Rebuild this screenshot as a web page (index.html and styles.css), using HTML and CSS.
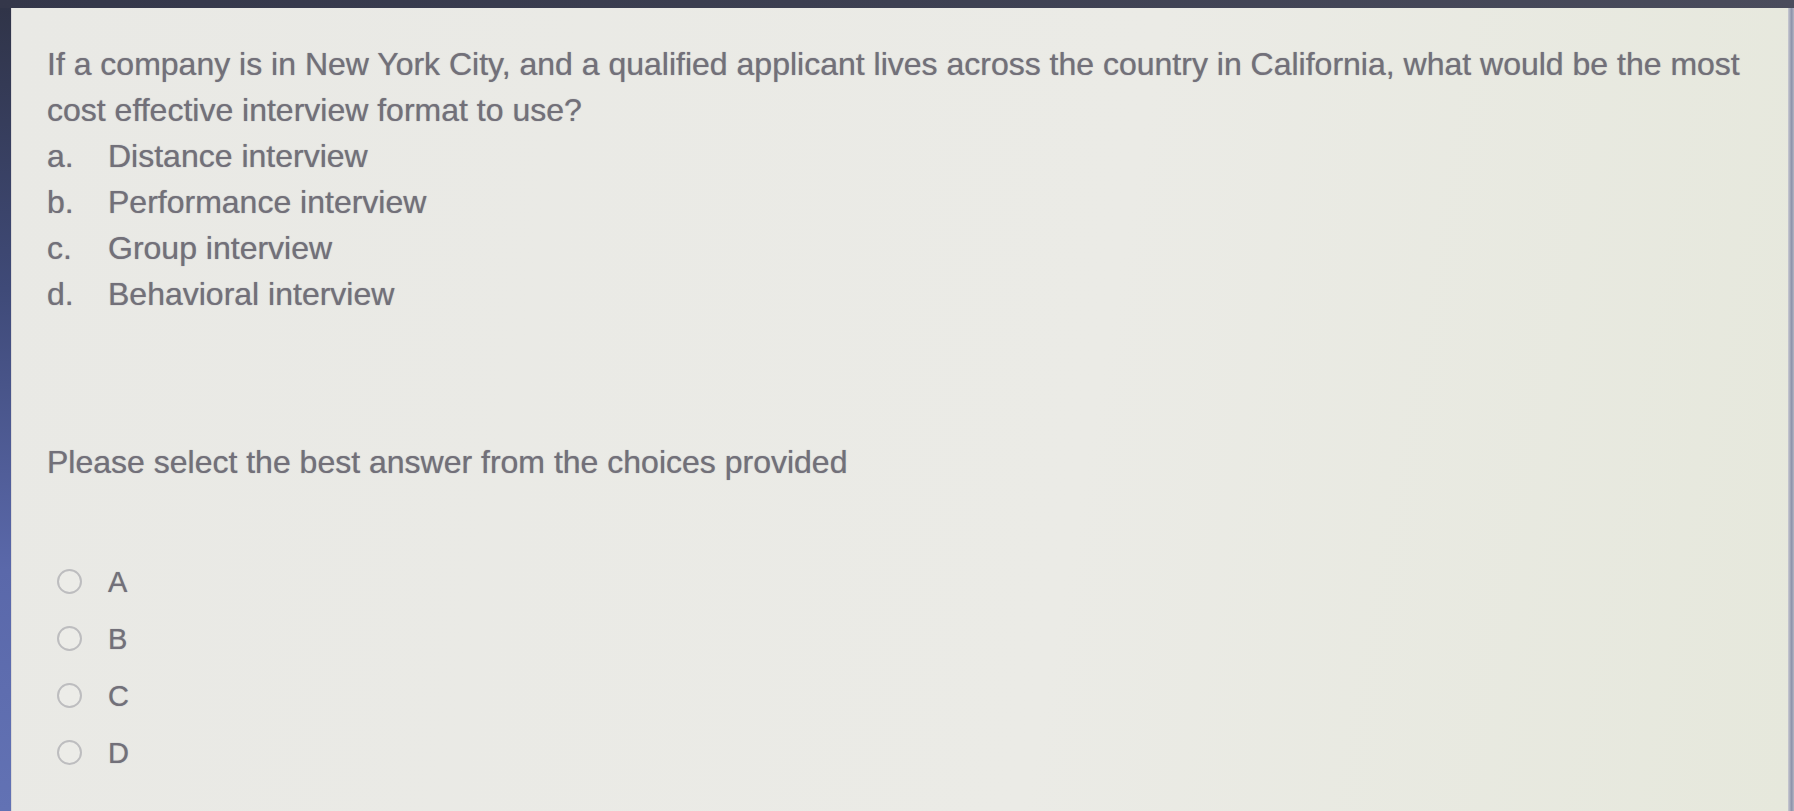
FILE: index.html
```html
<!DOCTYPE html>
<html lang="en">
<head>
<meta charset="utf-8">
<title>Question</title>
<link rel="stylesheet" href="styles.css">
</head>
<body>
<div class="bezel">
  <div class="edge-left"></div>
  <main class="screen">
    <p class="question">If a company is in New York City, and a qualified applicant lives across the country in California, what would be the most cost effective interview format to use?</p>
    <ol class="choices">
      <li><span class="mark">a.</span><span>Distance interview</span></li>
      <li><span class="mark">b.</span><span>Performance interview</span></li>
      <li><span class="mark">c.</span><span>Group interview</span></li>
      <li><span class="mark">d.</span><span>Behavioral interview</span></li>
    </ol>
    <p class="prompt">Please select the best answer from the choices provided</p>
    <div class="answers">
      <label class="answer"><span class="radio"></span><span>A</span></label>
      <label class="answer"><span class="radio"></span><span>B</span></label>
      <label class="answer"><span class="radio"></span><span>C</span></label>
      <label class="answer"><span class="radio"></span><span>D</span></label>
    </div>
  </main>
  <div class="edge-right"></div>
</div>
</body>
</html>
```
FILE: styles.css
```css
html, body {
  margin: 0;
  padding: 0;
  height: 100%;
  overflow: hidden;
}
body {
  background: #2f3140;
  font-family: "Liberation Sans", Arial, sans-serif;
}
.bezel {
  display: flex;
  height: 811px;
  padding-top: 8px;
  box-sizing: border-box;
  background: linear-gradient(90deg, #34374a 0%, #3d4052 50%, #4a4c5c 100%);
}
.edge-left {
  width: 11px;
  flex: none;
  background: linear-gradient(180deg, #303448 0%, #3f4a78 35%, #5a68aa 70%, #6272b4 100%);
  border-right: 1px solid #d9d7d6;
}
.edge-right {
  width: 6px;
  flex: none;
  background: linear-gradient(90deg, #c8cad2 0%, #8e93aa 60%, #b3b6c4 100%);
}
.screen {
  flex: 1;
  background: linear-gradient(100deg, #e9e9e5 0%, #ebebe6 60%, #e6e8dc 100%);
  padding: 33px 0 0 35px;
  color: #727079;
  font-size: 32px;
  line-height: 46px;
  text-shadow: 0 0 1px rgba(110, 108, 122, 0.7);
}
.question {
  margin: 0;
  padding-right: 4px;
}
.choices {
  list-style: none;
  margin: 0;
  padding: 0;
}
.choices li {
  display: flex;
}
.mark {
  width: 61px;
  flex: none;
}
.prompt {
  margin: 122px 0 0;
}
.answers {
  margin-top: 68px;
  display: flex;
  flex-direction: column;
}
.answer {
  display: flex;
  align-items: center;
  height: 57px;
  font-size: 29px;
}
.radio {
  width: 21px;
  height: 21px;
  border: 2px solid #bdbdbf;
  border-radius: 50%;
  margin-left: 10px;
  margin-right: 26px;
  background: #ecece8;
}
```
